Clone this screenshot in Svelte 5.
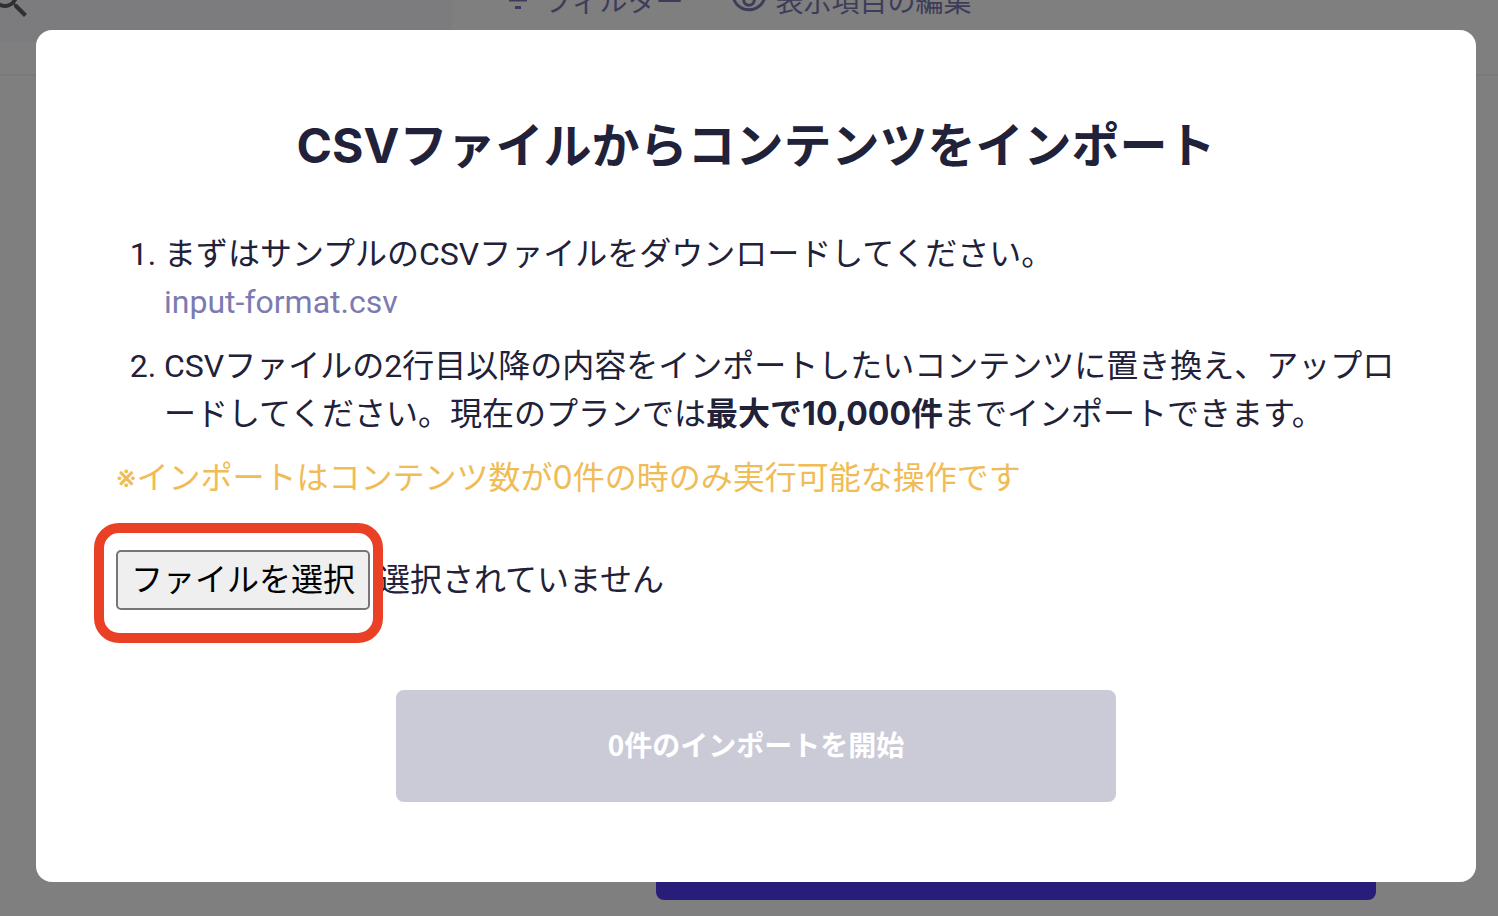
<script lang="ts">
  let fileInput: HTMLInputElement;
  let fileName = '';
  let count = 0;

  async function onFileChange() {
    const file = fileInput.files?.[0];
    fileName = file ? file.name : '';
    if (!file) {
      count = 0;
      return;
    }
    const rows = (await file.text()).split('\n').filter((row) => row.trim());
    count = Math.max(rows.length - 1, 0);
  }
</script>

<div class="page">
  <header class="toolbar">
    <label class="search">
      <svg viewBox="0 0 24 24" aria-hidden="true">
        <path d="M15.5 14h-.79l-.28-.27A6.47 6.47 0 0 0 16 9.5 6.5 6.5 0 1 0 9.5 16c1.61 0 3.09-.59 4.23-1.57l.27.28v.79l5 4.99L20.49 19l-4.99-5zm-6 0C7.01 14 5 11.99 5 9.5S7.01 5 9.5 5 14 7.01 14 9.5 11.99 14 9.5 14z" />
      </svg>
      <input type="search" aria-label="検索" />
    </label>
    <button type="button" class="tool">
      <svg viewBox="0 0 24 24" aria-hidden="true">
        <path d="M10 18h4v-2h-4v2zM3 6v2h18V6H3zm3 7h12v-2H6v2z" />
      </svg>
      フィルター
    </button>
    <button type="button" class="tool">
      <svg viewBox="0 0 24 24" aria-hidden="true">
        <path d="M12 6.5c3.79 0 7.17 2.13 8.82 5.5-1.65 3.37-5.03 5.5-8.82 5.5S4.83 15.37 3.18 12C4.83 8.63 8.21 6.5 12 6.5m0-2C7 4.500 2.730 7.610 1 12c1.730 4.390 6 7.500 11 7.500s9.270-3.110 11-7.500c-1.730-4.390-6-7.500-11-7.500zm0 5a2.5 2.5 0 0 1 0 5 2.500 2.500 0 0 1 0-5m0-2c-2.480 0-4.500 2.020-4.500 4.500s2.020 4.500 4.500 4.500 4.500-2.020 4.500-4.500-2.020-4.500-4.500-4.500z" />
      </svg>
      表示項目の編集
    </button>
  </header>
  <button type="button" class="create" aria-label="追加"></button>
</div>

<div class="overlay">
  <div class="modal" role="dialog" aria-modal="true" aria-labelledby="import-title">
    <h1 id="import-title">CSVファイルからコンテンツをインポート</h1>
    <ol>
      <li>
        まずはサンプルのCSVファイルをダウンロードしてください。<br />
        <a href="#input-format">input-format.csv</a>
      </li>
      <li>
        CSVファイルの2行目以降の内容をインポートしたいコンテンツに置き換え、アップロードしてください。現在のプランでは<strong>最大で10,000件</strong>までインポートできます。
      </li>
    </ol>
    <p class="note">※インポートはコンテンツ数が0件の時のみ実行可能な操作です</p>

    <div class="file">
      <input
        bind:this={fileInput}
        on:change={onFileChange}
        type="file"
        accept=".csv"
        aria-label="ファイルを選択"
        hidden
      />
      <div class="picker">
        <button type="button" on:click={() => fileInput.click()}>ファイルを選択</button>
        <span class="ring"></span>
      </div>
      <span>{fileName || '選択されていません'}</span>
    </div>

    <button type="button" class="submit" disabled={count === 0}>{count}件のインポートを開始</button>
  </div>
</div>

<style>
  :global(body) {
    margin: 0;
    background: #fff;
    color: #212139;
    font-family: Inter, 'Noto Sans CJK JP', sans-serif;
  }

  button,
  input {
    font-family: inherit;
  }

  .page {
    display: flex;
    flex-direction: column;
    justify-content: space-between;
    box-sizing: border-box;
    height: 100vh;
    padding-bottom: 16px;
    overflow: hidden;
  }

  .toolbar {
    display: flex;
    align-items: center;
    gap: 48px;
    height: 148px;
    margin: -74px 0 0 -38px;
    border-bottom: 2px solid #f5f5f5;
  }

  .search {
    display: flex;
    align-items: center;
    box-sizing: border-box;
    width: 490px;
    height: 84px;
    padding-left: 24px;
    background: #f8f8fd;
  }

  .search svg {
    flex: none;
    width: 48px;
    height: 48px;
    fill: #606068;
  }

  .search input {
    flex: 1;
    min-width: 0;
    border: 0;
    background: none;
    font-size: 28px;
  }

  .tool {
    display: flex;
    align-items: center;
    gap: 8px;
    padding: 0;
    border: 0;
    background: none;
    color: #7b7bb2;
    font-size: 28px;
  }

  .tool svg {
    width: 36px;
    height: 36px;
    fill: currentColor;
  }

  .create {
    align-self: flex-end;
    width: 720px;
    height: 112px;
    margin-right: 122px;
    border: 0;
    border-radius: 8px;
    background: #503af0;
  }

  .overlay {
    position: fixed;
    inset: 0;
    padding: 30px 22px 30px 36px;
    overflow: auto;
    background: rgba(0, 0, 0, 0.5);
  }

  .modal {
    padding: 80px;
    border-radius: 16px;
    background: #fff;
    font-family: Roboto, 'Noto Sans CJK JP', sans-serif;
    font-size: 32px;
    line-height: 48px;
  }

  h1,
  strong,
  .note {
    font-family: Inter, 'Noto Sans CJK JP', sans-serif;
  }

  h1 {
    margin: 0 0 48px;
    font-size: 48px;
    font-weight: 700;
    line-height: 72px;
    text-align: center;
  }

  ol {
    margin: 0;
    padding-left: 48px;
    line-break: loose;
  }

  li {
    margin-bottom: 16px;
  }

  a {
    color: #7b7bb2;
    text-decoration: none;
  }

  .note {
    margin: 0 0 48px;
    color: #f0bc56;
  }

  .file {
    display: flex;
    align-items: center;
    gap: 8px;
    margin-bottom: 80px;
  }

  .picker {
    position: relative;
  }

  .picker button {
    display: block;
    padding: 4px 13px;
    border: 2px solid #767676;
    border-radius: 5px;
    background: #efefef;
    color: #000;
    font-size: 32px;
    line-height: 48px;
  }

  .ring {
    position: absolute;
    inset: -27px -13px -33px -22px;
    border: 10px solid #ea4025;
    border-radius: 25px;
    pointer-events: none;
  }

  .submit {
    display: block;
    width: 100%;
    max-width: 720px;
    height: 112px;
    margin: 0 auto;
    padding: 0 0 4px;
    border: 0;
    border-radius: 8px;
    background: #503af0;
    color: #fff;
    font-family: 'Noto Sans CJK JP', sans-serif;
    font-size: 28px;
    font-weight: 700;
  }

  .submit:disabled {
    background: #cbcbd8;
  }
</style>
